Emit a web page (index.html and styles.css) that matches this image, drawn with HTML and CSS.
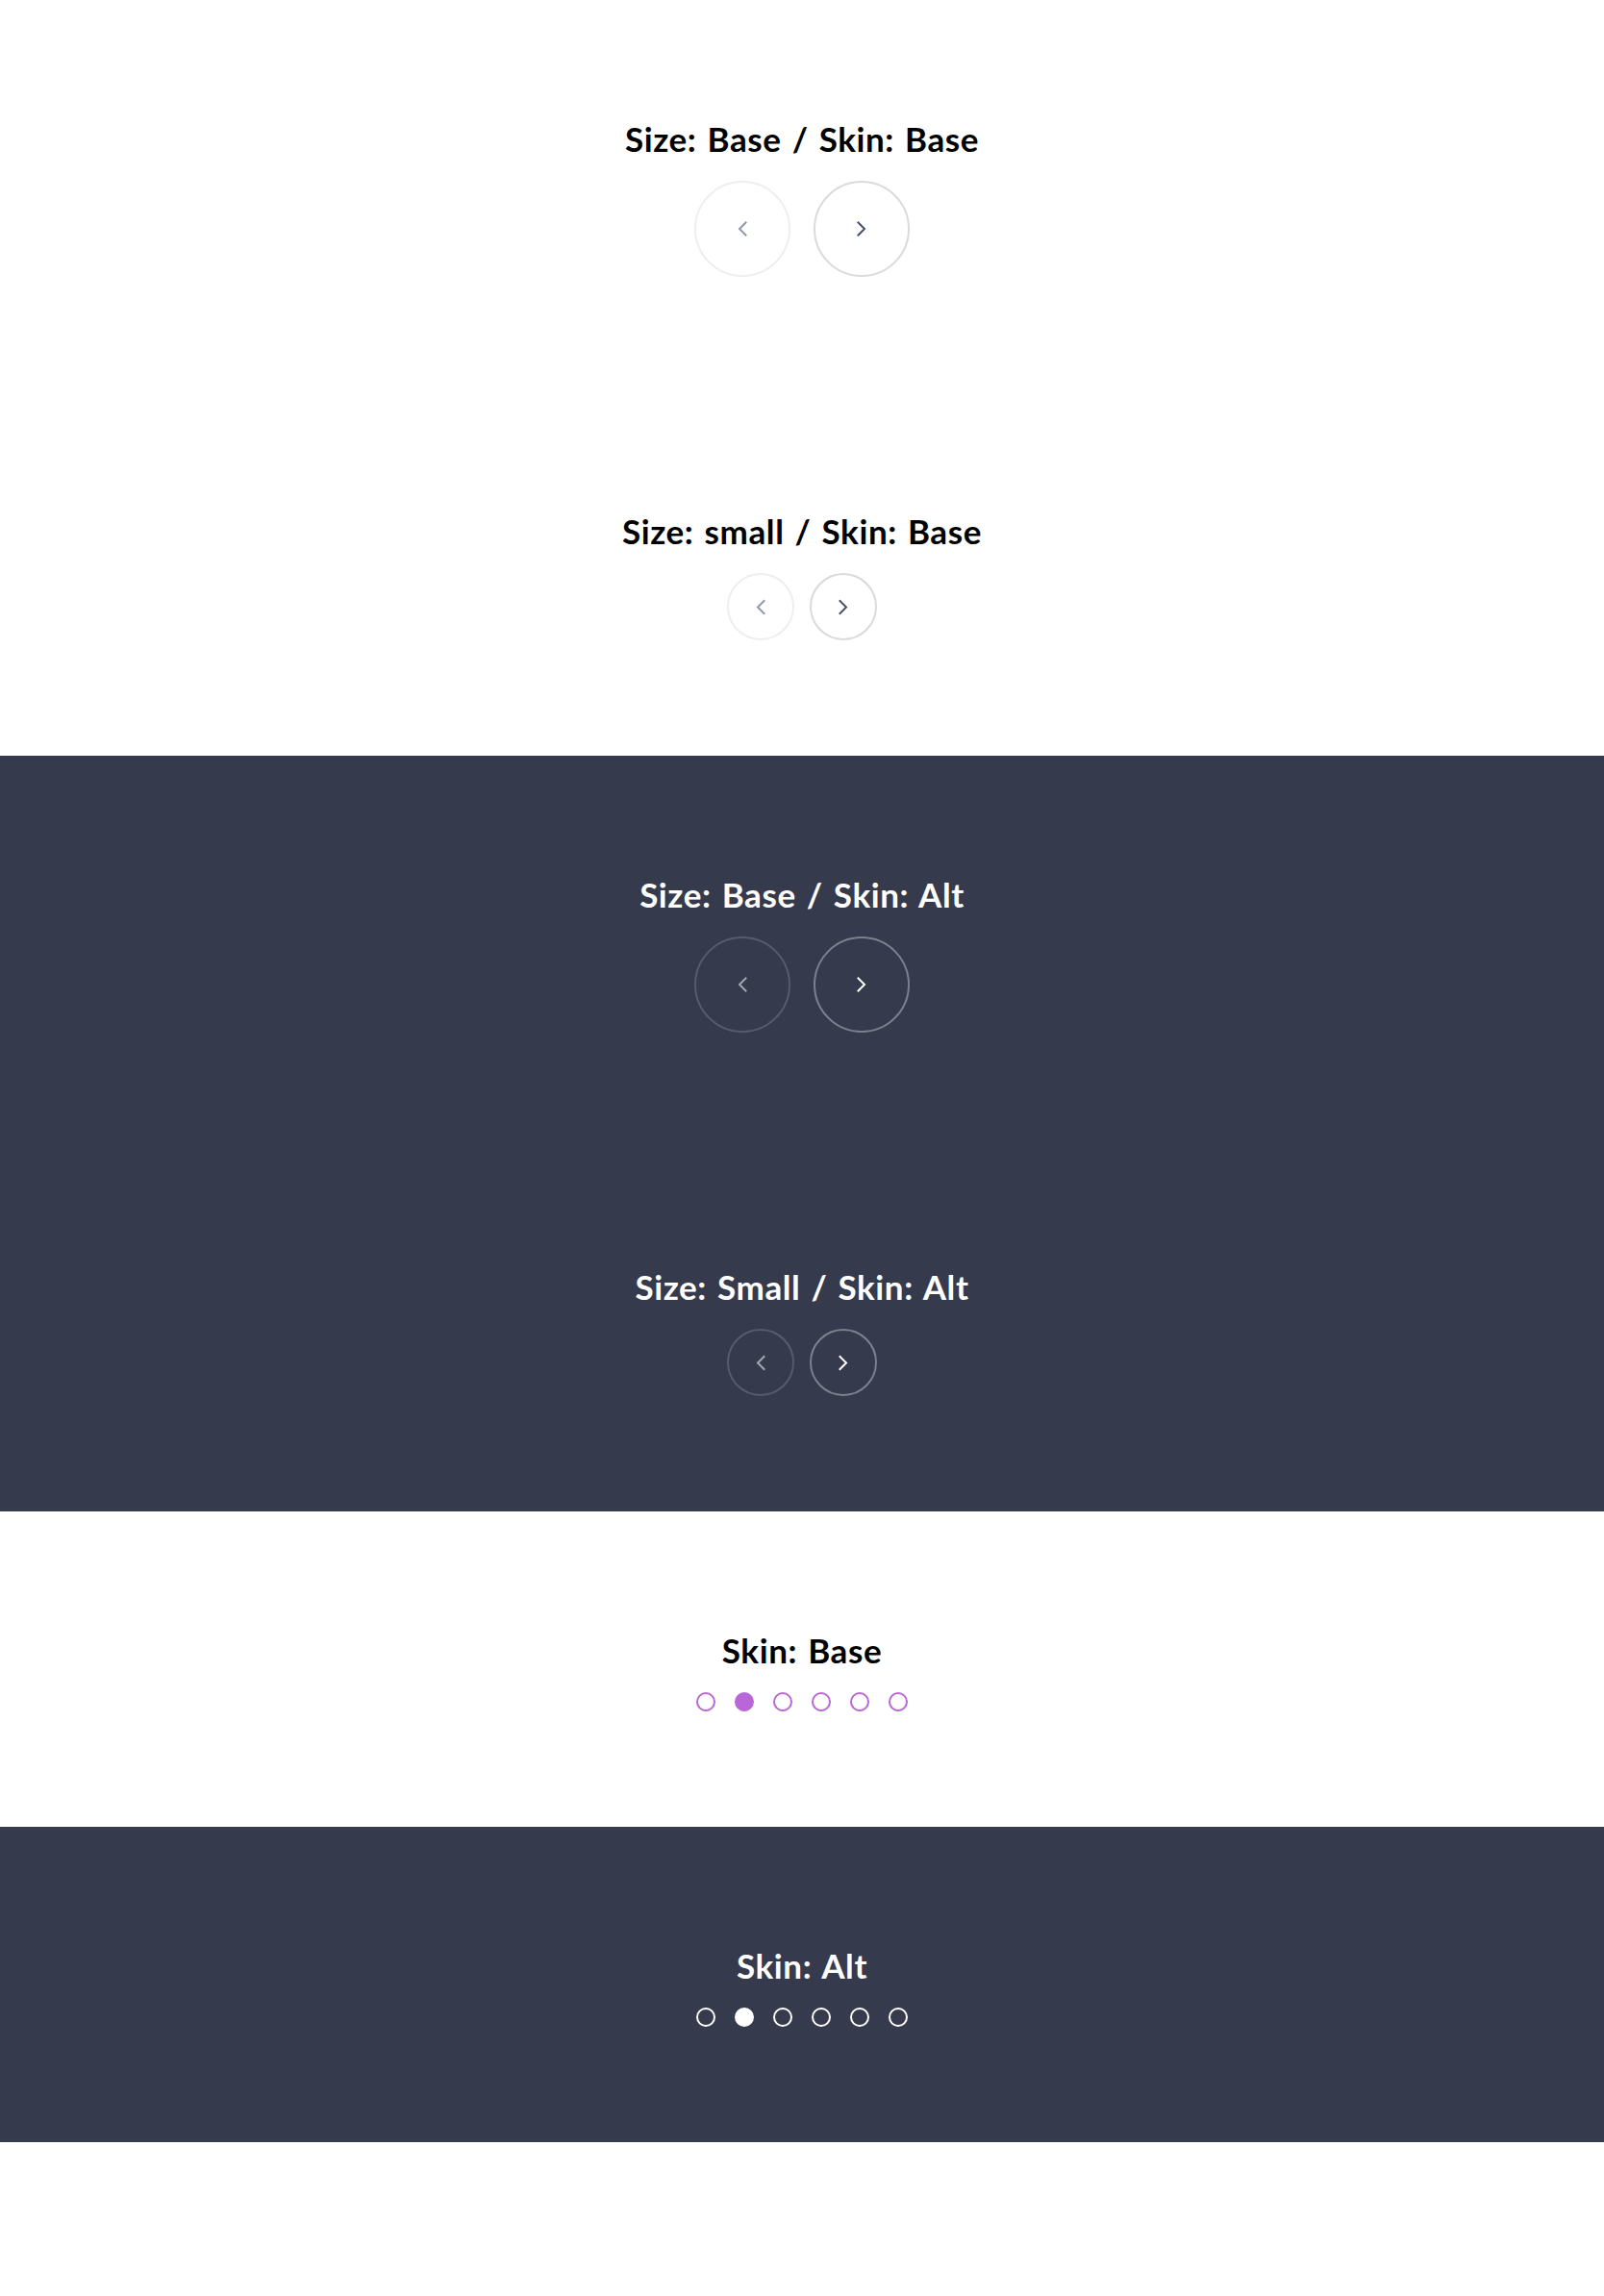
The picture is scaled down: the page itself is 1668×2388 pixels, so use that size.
FILE: index.html
```html
<!DOCTYPE html>
<html lang="en">
<head>
<meta charset="utf-8">
<title>Carousel controls</title>
<link rel="stylesheet" href="styles.css">
</head>
<body>
<section class="panel panel-light">
  <div class="demo">
    <h2 class="demo-title">Size: Base / Skin: Base</h2>
    <div class="controls">
      <button class="nav nav-base nav-prev" aria-label="Previous"><svg viewBox="0 0 10 16" class="chev"><path d="M8.5 1.5 L2 8 L8.5 14.5"/></svg></button>
      <button class="nav nav-base nav-next" aria-label="Next"><svg viewBox="0 0 10 16" class="chev"><path d="M1.5 1.5 L8 8 L1.5 14.5"/></svg></button>
    </div>
  </div>
  <div class="demo">
    <h2 class="demo-title">Size: small / Skin: Base</h2>
    <div class="controls controls-small">
      <button class="nav nav-small nav-prev" aria-label="Previous"><svg viewBox="0 0 10 16" class="chev chev-small"><path d="M8.5 1.5 L2 8 L8.5 14.5"/></svg></button>
      <button class="nav nav-small nav-next" aria-label="Next"><svg viewBox="0 0 10 16" class="chev chev-small"><path d="M1.5 1.5 L8 8 L1.5 14.5"/></svg></button>
    </div>
  </div>
</section>
<section class="panel panel-dark">
  <div class="demo">
    <h2 class="demo-title">Size: Base / Skin: Alt</h2>
    <div class="controls">
      <button class="nav nav-base nav-prev" aria-label="Previous"><svg viewBox="0 0 10 16" class="chev"><path d="M8.5 1.5 L2 8 L8.5 14.5"/></svg></button>
      <button class="nav nav-base nav-next" aria-label="Next"><svg viewBox="0 0 10 16" class="chev"><path d="M1.5 1.5 L8 8 L1.5 14.5"/></svg></button>
    </div>
  </div>
  <div class="demo">
    <h2 class="demo-title">Size: Small / Skin: Alt</h2>
    <div class="controls controls-small">
      <button class="nav nav-small nav-prev" aria-label="Previous"><svg viewBox="0 0 10 16" class="chev chev-small"><path d="M8.5 1.5 L2 8 L8.5 14.5"/></svg></button>
      <button class="nav nav-small nav-next" aria-label="Next"><svg viewBox="0 0 10 16" class="chev chev-small"><path d="M1.5 1.5 L8 8 L1.5 14.5"/></svg></button>
    </div>
  </div>
</section>
<section class="panel panel-light">
  <div class="demo">
    <h2 class="demo-title">Skin: Base</h2>
    <div class="dots">
      <span class="dot"></span><span class="dot dot-active"></span><span class="dot"></span><span class="dot"></span><span class="dot"></span><span class="dot"></span>
    </div>
  </div>
</section>
<section class="panel panel-dark">
  <div class="demo">
    <h2 class="demo-title">Skin: Alt</h2>
    <div class="dots">
      <span class="dot"></span><span class="dot dot-active"></span><span class="dot"></span><span class="dot"></span><span class="dot"></span><span class="dot"></span>
    </div>
  </div>
</section>
</body>
</html>
```

FILE: styles.css
```css
html, body {
  margin: 0;
  padding: 0;
  background: #ffffff;
}
body {
  font-family: "Lato", "Open Sans", sans-serif;
}
.panel {
  display: flex;
  flex-direction: column;
}
.panel-light {
  background: #ffffff;
  color: #000000;
}
.panel-dark {
  background: #363a4d;
  color: #ffffff;
}
.demo {
  padding: 120px 0;
  display: flex;
  flex-direction: column;
  align-items: center;
}
.demo-title {
  margin: 0 0 20px;
  height: 48px;
  line-height: 48px;
  font-size: 35px;
  font-weight: 700;
  letter-spacing: 0.6px;
  word-spacing: 2px;
}
.controls {
  display: flex;
  gap: 24px;
}
.controls-small {
  gap: 16px;
}
.nav {
  box-sizing: border-box;
  border-radius: 50%;
  background: transparent;
  padding: 0;
  margin: 0;
  display: flex;
  align-items: center;
  justify-content: center;
  cursor: pointer;
  border: 2px solid #ececec;
}
.nav-base {
  width: 100px;
  height: 100px;
}
.nav-small {
  width: 70px;
  height: 70px;
}
.chev {
  width: 10px;
  height: 16px;
  fill: none;
  stroke-width: 2;
  stroke-linecap: square;
  stroke-linejoin: miter;
}
.chev-small {
  height: 17px;
}
.panel-light .nav-prev {
  border-color: #eeeeef;
}
.panel-light .nav-prev .chev {
  stroke: #8f99a9;
}
.panel-light .nav-next {
  border-color: #dadadd;
}
.panel-light .nav-next .chev {
  stroke: #46506a;
}
.panel-dark .nav-prev {
  border-color: #575b6b;
}
.panel-dark .nav-prev .chev {
  stroke: #a3a6b0;
}
.panel-dark .nav-next {
  border-color: #7d808d;
}
.panel-dark .nav-next .chev {
  stroke: #ffffff;
}
.dots {
  display: flex;
  gap: 20px;
  height: 20px;
}
.dot {
  box-sizing: border-box;
  width: 20px;
  height: 20px;
  border-radius: 50%;
  border: 2px solid #b966d8;
}
.panel-light .dot-active {
  background: #b966d8;
}
.panel-dark .dot {
  border-color: #ffffff;
}
.panel-dark .dot-active {
  background: #ffffff;
}
```
